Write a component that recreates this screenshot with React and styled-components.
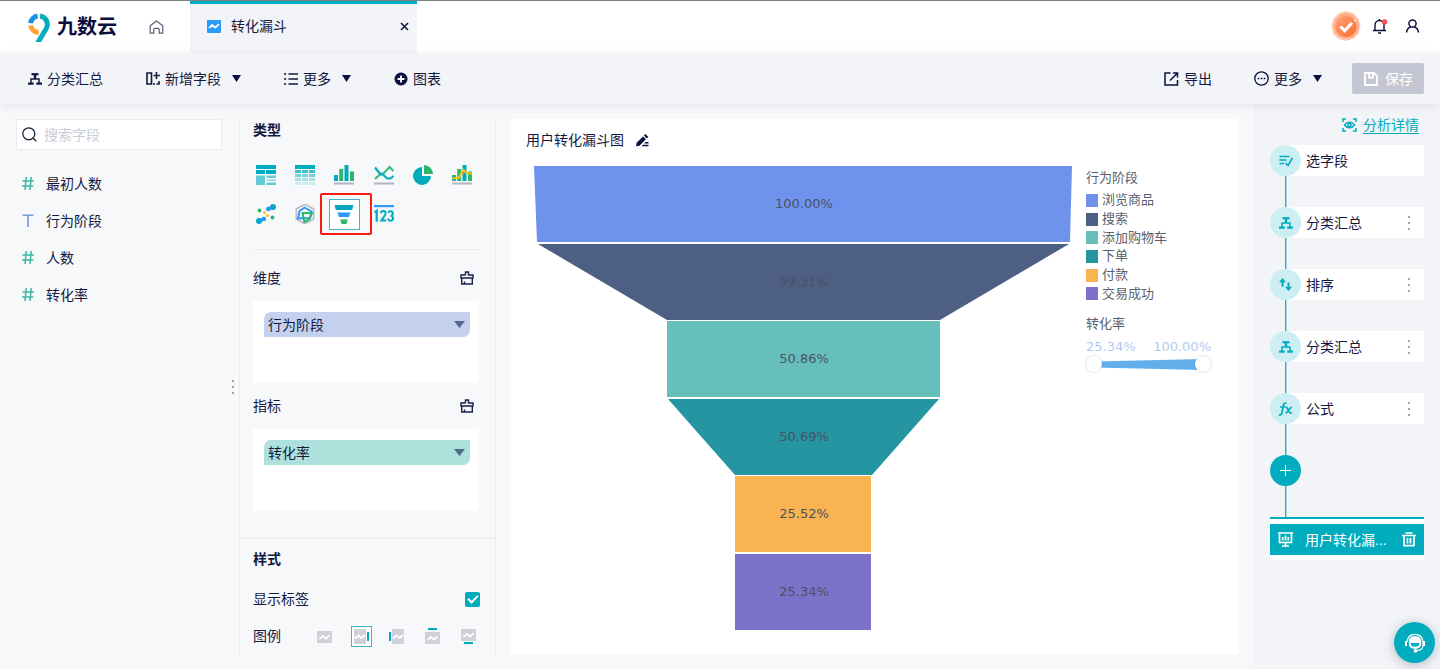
import React from "react";
import styled, { createGlobalStyle, css } from "styled-components";

const teal = "#00acbe";
const ink = "#0c0f3d";

const GlobalStyle = createGlobalStyle`
  *, *::before, *::after { box-sizing: border-box; }
  body {
    margin: 0;
    background: #f7f8fa;
    color: #14173f;
    font-family: "Liberation Sans", "Noto Sans CJK SC", sans-serif;
    font-size: 14px;
    line-height: 22px;
  }
  button, input { font: inherit; color: inherit; }
  button { padding: 0; border: 0; background: none; cursor: pointer; }
  svg { display: block; flex: none; }
  h1, h2, h3, ul, ol, p { margin: 0; padding: 0; list-style: none; font-size: 14px; font-weight: 400; }
`;

/* ---------- page frame ---------- */

const Page = styled.div`
  display: flex;
  flex-direction: column;
  min-height: 100vh;
`;

const Header = styled.header`
  display: flex;
  height: 53px;
  border-top: 1px solid #808080;
  background: #fff;
`;

const Brand = styled.a`
  display: flex;
  align-items: center;
  gap: 7px;
  padding-left: 28px;
  width: 149px;
  color: ${ink};
  font-size: 20px;
  font-weight: 700;
  text-decoration: none;
`;

const HomeLink = styled.a`
  display: flex;
  align-items: center;
  width: 41px;
  color: #5b5f7c;
`;

const Tab = styled.div`
  display: flex;
  align-items: center;
  gap: 10px;
  width: 227px;
  padding: 0 8px 5px 17px;
  border-top: 3px solid ${teal};
  background: #f2f4f8;
`;

const TabTitle = styled.span`
  flex: 1;
`;

const IconButton = styled.button`
  display: flex;
  align-items: center;
  justify-content: center;
`;

const Account = styled.div`
  display: flex;
  align-items: center;
  gap: 11px;
  margin-left: auto;
  padding: 0 20px 2px 0;
`;

const UserButton = styled(IconButton)`
  margin-left: 6px;
`;

const Toolbar = styled.nav`
  position: relative;
  display: flex;
  align-items: center;
  gap: 43px;
  height: 51px;
  padding: 0 16px 0 28px;
  background: #f2f4f8;
  box-shadow: 0 2px 10px rgba(12, 15, 61, 0.08);
`;

const ToolButton = styled.button`
  display: flex;
  align-items: center;
  gap: 5px;
`;

const ToolbarEnd = styled.div`
  display: flex;
  align-items: center;
  gap: 42px;
  margin-left: auto;
`;

const Caret = styled.span`
  width: ${(p) => (p.$color ? 11 : 9)}px;
  height: 7px;
  margin-left: 6px;
  background: ${(p) => p.$color || ink};
  clip-path: polygon(0 0, 100% 0, 50% 100%);
`;

const SaveButton = styled.button`
  display: flex;
  align-items: center;
  gap: 7px;
  height: 31px;
  margin-left: -12px;
  padding: 0 11px 0 12px;
  border-radius: 2px;
  background: #c5c6d4;
  color: #fff;
`;

const Workspace = styled.main`
  display: flex;
  flex: 1;
`;

/* ---------- field list ---------- */

const FieldPanel = styled.aside`
  display: flex;
  width: 240px;
  margin: 15px 0;
  padding-left: 16px;
  border-right: 1px solid #ebedf1;
`;

const FieldColumn = styled.div`
  flex: 1;
  min-width: 0;
`;

const SearchBox = styled.label`
  display: flex;
  align-items: center;
  gap: 7px;
  height: 31px;
  padding: 0 5px;
  border: 1px solid #e9ebf0;
  background: #fff;
`;

const SearchInput = styled.input`
  flex: 1;
  min-width: 0;
  height: 22px;
  padding: 0;
  border: 0;
  outline: 0;
  background: none;
  &::placeholder { color: #c9cbd8; opacity: 1; }
`;

const FieldList = styled.ul`
  && { padding: 15px 0 0 6px; }
`;

const FieldItem = styled.li`
  display: flex;
  align-items: center;
  gap: 12px;
  height: 37px;
`;

const ResizeHandle = styled.div`
  display: flex;
  flex: none;
  align-items: center;
  justify-content: center;
  width: 17px;
  padding-left: 4px;
  color: #9a9cab;
  cursor: col-resize;
`;

/* ---------- chart settings ---------- */

const SettingsPanel = styled.section`
  width: 256px;
  margin: 15px 0;
  border-right: 1px solid #ebedf1;
`;

const Group = styled.div`
  margin: 0 16px 0 13px;
`;

const StyleGroup = styled.div`
  margin: 0 15px 0 13px;
  padding-top: 9px;
`;

const Heading = styled.h2`
  && { font-weight: 700; }
`;

const TypeGrid = styled.div`
  display: grid;
  grid-template-columns: repeat(6, 20px);
  justify-content: space-between;
  row-gap: 19px;
  padding: 24px 7px 25px 3px;
  border-bottom: 1px solid #e9ebf0;
`;

const TypeButton = styled.button`
  position: relative;
  display: flex;
  width: 20px;
  height: 20px;
  svg { position: relative; }
  ${(p) =>
    p.$active &&
    css`
      &::before {
        content: "";
        position: absolute;
        inset: -5px;
        width: 31px;
        height: 31px;
        border: 1px solid #3fb4c2;
        background: #fff;
      }
      &::after {
        content: "";
        position: absolute;
        inset: -11px -18px -11px -14px;
        border: 2px solid #fb1a10;
        border-radius: 2px;
      }
    `}
`;

const GroupTitle = styled.div`
  display: flex;
  align-items: center;
  justify-content: space-between;
  padding: ${(p) => (p.$first ? 17 : 12)}px 5px 12px 0;
`;

const DropZone = styled.div`
  height: 82px;
  padding: 11px 9px 0 11px;
  background: #fff;
`;

const FieldChip = styled.button`
  display: flex;
  align-items: center;
  justify-content: space-between;
  width: 100%;
  height: 25px;
  padding: 0 5px 0 4px;
  border-radius: 7px 0;
  background: ${(p) => p.$color};
`;

const Divider = styled.hr`
  height: 1px;
  margin: 27px 0 0;
  border: 0;
  background: #e9ebf0;
`;

const SettingRow = styled.div`
  display: flex;
  align-items: center;
  justify-content: space-between;
  padding-top: ${(p) => p.$gap}px;
`;

const CheckBox = styled.input`
  appearance: none;
  display: flex;
  align-items: center;
  justify-content: center;
  width: 15px;
  height: 15px;
  margin: 0;
  border-radius: 2px;
  background: ${teal};
  &::before {
    content: "";
    width: 10px;
    height: 6px;
    margin-bottom: 3px;
    border: solid #fff;
    border-width: 0 0 2px 2px;
    transform: rotate(-45deg);
  }
  &:not(:checked)::before { display: none; }
`;

const LegendChoices = styled.div`
  display: flex;
  gap: 15px;
`;

const LegendChoice = styled.label`
  display: flex;
  border: 1px solid ${(p) => (p.$active ? "#3fb4c2" : "transparent")};
  background: ${(p) => (p.$active ? "#fff" : "none")};
`;

const HiddenRadio = styled.input`
  position: absolute;
  width: 1px;
  height: 1px;
  margin: 0;
  opacity: 0;
`;

/* ---------- chart card ---------- */

const ChartCard = styled.section`
  flex: 1;
  min-width: 0;
  margin: 15px;
  padding: 10px 28px 24px 15px;
  background: #fff;
`;

const ChartTitle = styled.div`
  display: flex;
  align-items: center;
  gap: 11px;
`;

const ChartArea = styled.div`
  display: flex;
  gap: 13px;
  padding: 15px 0 0 8px;
`;

const FunnelSvg = styled.svg`
  flex: 1;
  min-width: 0;
  height: auto;
  text {
    fill: #4a5165;
    font-family: "DejaVu Sans", sans-serif;
    font-size: 13px;
    text-anchor: middle;
  }
`;

const Legend = styled.div`
  width: 125px;
  padding-top: 2px;
  color: #595f6e;
  font-size: 13px;
  line-height: 20px;
`;

const LegendTitle = styled.h3`
  && { font-size: 13px; }
`;

const LegendList = styled.ul`
  && {
    display: flex;
    flex-direction: column;
    height: 112px;
    margin: 3px 0 11px;
    font-size: 13px;
    line-height: 18px;
  }
`;

const LegendItem = styled.li`
  display: flex;
  flex: 1;
  align-items: center;
  gap: 4px;
  &::before {
    content: "";
    width: 12px;
    height: 13px;
    background: ${(p) => p.$color};
  }
`;

const RangeValues = styled.div`
  display: flex;
  justify-content: space-between;
  margin-top: 3px;
  color: #b3c9f2;
  font-family: "DejaVu Sans", sans-serif;
`;

const RangeTrack = styled.div`
  position: relative;
  height: 16px;
  margin-top: -1px;
`;

const RangeInput = styled.input`
  position: absolute;
  inset: 0;
  width: 100%;
  height: 16px;
  margin: 0;
  appearance: none;
  background: none;
  pointer-events: none;
  &::-webkit-slider-thumb {
    appearance: none;
    width: 16px;
    height: 16px;
    border-radius: 50%;
    background: #fff;
    box-shadow: 0 0 2px rgba(80, 90, 130, 0.35);
    pointer-events: auto;
  }
`;

/* ---------- analysis steps ---------- */

const StepsPanel = styled.aside`
  width: 186px;
  padding: 10px 16px 0 16px;
  background: #f2f4f8;
`;

const DetailLink = styled.a`
  display: flex;
  align-items: center;
  justify-content: flex-end;
  gap: 6px;
  padding-right: 5px;
  color: ${teal};
  text-underline-offset: 3px;
`;

const StepList = styled.ol`
  && { padding-top: 9px; }
`;

const Step = styled.li`
  display: flex;
  align-items: center;
  height: 31px;
  margin-bottom: 31px;
  padding-right: 10px;
  position: relative;
  background: linear-gradient(to right, transparent 15px, #fff 15px);
  &::after {
    content: "";
    position: absolute;
    top: 31px;
    left: 15px;
    width: 1px;
    height: 31px;
    background: #1bb4c4;
    box-shadow: 1px 0 #9bdbe3;
  }
`;

const StepIcon = styled.span`
  display: flex;
  align-items: center;
  justify-content: center;
  width: 31px;
  height: 31px;
  margin-right: 5px;
  border-radius: 50%;
  background: #cdeff3;
  color: ${teal};
`;

const StepName = styled.span`
  flex: 1;
`;

const AddStep = styled(Step)`
  background: none;
`;

const AddButton = styled(IconButton)`
  width: 31px;
  height: 31px;
  border-radius: 50%;
  background: ${teal};
  color: #fff;
`;

const OutputFrame = styled.div`
  padding: 5px 0;
  border-top: 2px solid ${teal};
  background: #fff;
`;

const OutputStep = styled.div`
  display: flex;
  align-items: center;
  height: 31px;
  padding: 0 8px;
  background: ${teal};
  color: #fff;
`;

const OutputName = styled.span`
  flex: 1;
  margin-left: 12px;
  white-space: nowrap;
`;

const ChatButton = styled(IconButton)`
  position: fixed;
  right: 5px;
  bottom: 6px;
  width: 41px;
  height: 41px;
  border-radius: 50%;
  background: ${teal};
  box-shadow: 0 2px 12px rgba(12, 15, 61, 0.25);
`;

/* ---------- icons ---------- */

const LogoIcon = () => (
  <svg width="22" height="29" viewBox="0 0 22 29" fill="none" strokeWidth="5">
    <path d="M2.600 10.200A8.500 8.500 0 0 1 9.600 3" stroke="#1890ea" />
    <path d="M2.600 12.600A8.500 8.500 0 0 0 10.600 19.500" stroke="#ffa12e" />
    <path d="M12 3a8.500 8.500 0 0 1 6 13L9 31" stroke="#06adbd" />
  </svg>
);

const HomeIcon = () => (
  <svg width="15" height="14" viewBox="0 0 15 14" fill="none" stroke="currentColor" strokeWidth="1.200">
    <path d="M1.200 5.800 7.500 1l6.300 4.800v7.400h-3.600V9.600a1.300 1.300 0 0 0-1.300-1.300H6.100a1.300 1.300 0 0 0-1.300 1.300v3.600H1.200z" />
  </svg>
);

const TabIcon = () => (
  <svg width="14" height="13" viewBox="0 0 14 13">
    <rect width="14" height="13" rx="1" fill="#2a9bfb" />
    <path d="M2 8l3.200-3 3 2.600L12 4.200" fill="none" stroke="#fff" strokeWidth="1.700" />
  </svg>
);

const CloseIcon = () => (
  <svg width="9" height="9" viewBox="0 0 9 9" stroke={ink} strokeWidth="1.500">
    <path d="M1 1l7 7M8 1L1 8" />
  </svg>
);

const MedalIcon = () => (
  <svg width="30" height="30" viewBox="0 0 30 30">
    <defs>
      <linearGradient id="medal" x1="0" y1="0" x2="1" y2="1">
        <stop offset="0" stopColor="#ffa274" />
        <stop offset="1" stopColor="#f86b2c" />
      </linearGradient>
    </defs>
    <path d="M15 0l7 2 5 5 2.500 7-1.500 7.500-5 6L15 30l-7.500-2L2 22.500.5 15 2.500 7.500 8 2z" fill="#ffc8ad" />
    <path d="M15 2l6.500 2 4.500 4.500 2 6-1.500 6.500-4.500 5-7 2-6.500-2-4.500-5L2.500 15l2-6L9 4z" fill="#ffab85" />
    <circle cx="15" cy="15.500" r="10.500" fill="url(#medal)" />
    <path d="M9.500 15.500l4.200 4.300 7.300-8" fill="none" stroke="#fff" strokeWidth="3" />
    <circle cx="24" cy="9.500" r="1" fill="#fff" />
  </svg>
);

const BellIcon = () => (
  <svg width="16" height="16" viewBox="0 0 16 16" fill="none" stroke={ink} strokeWidth="1.400">
    <path d="M1 12.500h13M3 12.500V7a4.500 4.500 0 0 1 9 0v5.500M7.500 2.500V1M6 15h3" />
    <circle cx="12.500" cy="4" r="2.700" fill="#ee4f55" stroke="none" />
  </svg>
);

const UserIcon = () => (
  <svg width="15" height="14" viewBox="0 0 15 14" fill="none" stroke={ink} strokeWidth="1.500">
    <circle cx="7.500" cy="4.500" r="3.600" />
    <path d="M1.500 13.500c.4-3 2-5 4.400-5.500M13.500 13.500c-.4-3-2-5-4.400-5.500" />
  </svg>
);

const TreeIcon = () => (
  <svg width="14" height="12" viewBox="0 0 14 12" fill="none" stroke="currentColor">
    <path d="M3.500 1.200h7" strokeWidth="2.200" />
    <path d="M7 2v4" strokeWidth="2.400" />
    <path d="M3 10V6h8v4" strokeWidth="1.500" />
    <path d="M0 10.700h5.700M8.300 10.700H14" strokeWidth="2.200" />
  </svg>
);

const AddFieldIcon = () => (
  <svg width="14" height="13" viewBox="0 0 14 13" fill="none" stroke="currentColor" strokeWidth="1.600">
    <path d="M1 1h4.500v11H1zM10.500 0v7M7.500 3.500H14M7 12h2M10.500 12H13V9" />
  </svg>
);

const ListIcon = () => (
  <svg width="14" height="12" viewBox="0 0 14 12" stroke="currentColor" strokeWidth="1.600">
    <path d="M0 1h2.200M0 6h2.200M0 11h2.200M4.500 1H14M4.500 6H14M4.500 11H14" />
  </svg>
);

const PlusCircleIcon = () => (
  <svg width="14" height="14" viewBox="0 0 14 14">
    <circle cx="7" cy="7" r="6.500" fill={ink} />
    <path d="M7 3.500v7M3.500 7h7" stroke="#fff" strokeWidth="1.800" />
  </svg>
);

const ExportIcon = () => (
  <svg width="15" height="14" viewBox="0 0 15 14" fill="none" stroke={ink} strokeWidth="1.500">
    <path d="M6.500 1H1v12h12.500V8M9 1h4.500v4.500M13.500 1 6 8.500" />
  </svg>
);

const DotsCircleIcon = () => (
  <svg width="15" height="15" viewBox="0 0 15 15">
    <circle cx="7.500" cy="7.500" r="6.700" fill="none" stroke={ink} strokeWidth="1.300" />
    <path d="M3.700 7.500h1.600M6.700 7.500h1.600M9.700 7.500h1.600" stroke={ink} strokeWidth="1.600" />
  </svg>
);

const SaveIcon = () => (
  <svg width="14" height="14" viewBox="0 0 14 14" fill="none" stroke="#fff" strokeWidth="1.800">
    <path d="M1 1h9l3 3v9H1zM5 1v4.500h4V2" />
  </svg>
);

const SearchIcon = () => (
  <svg width="15" height="15" viewBox="0 0 15 15" fill="none" stroke="#20233f" strokeWidth="1.300">
    <circle cx="6.800" cy="6.800" r="6" />
    <path d="M11 11l3.300 3.300" />
  </svg>
);

const NumberIcon = () => (
  <svg width="12" height="13" viewBox="0 0 12 13" stroke="#3db5a2" strokeWidth="1.500">
    <path d="M4.200 0 3 13M9.200 0 8 13M.5 4h11.300M0 9h11.300" />
  </svg>
);

const TextIcon = () => (
  <svg width="12" height="13" viewBox="0 0 12 13" stroke="#7397e0" strokeWidth="1.600">
    <path d="M.5 1.200h11M6 1v12" />
  </svg>
);

const MoreIcon = () => (
  <svg width="3" height="14" viewBox="0 0 3 14" fill="currentColor">
    <rect x="1" y="0" width="2" height="2" />
    <rect x="1" y="6" width="2" height="2" />
    <rect x="1" y="12" width="2" height="2" />
  </svg>
);

const BrushIcon = () => (
  <svg width="14" height="14" viewBox="0 0 14 14" fill="none" stroke="#1c1f45" strokeWidth="1.400">
    <path d="M5.500 4V1h3v3H13v3H1V4h4.500M1.700 7v6h10.600V7M4.500 13v-2.500" />
  </svg>
);

const EditIcon = () => (
  <svg width="14" height="13" viewBox="0 0 14 13" fill={ink}>
    <path d="M1 12.200 1.600 8.800 8 2.400l2.900 2.900-6.400 6.400zM8.800 1.600 10.400 0l2.900 2.900-1.600 1.600zM8 10.800h5.500v1.500H6.500zM10.500 8h3v1.400H9.200z" />
  </svg>
);

const typeDrawings = {
  明细表: (
    <>
      <path d="M0 0h20v4H0zM0 5h9v4H0zM10 5h10v4H10z" fill={teal} />
      <path d="M0 10.500h9V20H0zM10.500 10.500H20V13h-9.500z" fill="#64ccd7" />
      <path d="M10.500 14.500H20V16h-9.500z" fill="#8cdbe2" />
      <path d="M10.500 17.500H20V20h-9.500z" fill="#64ccd7" />
    </>
  ),
  交叉表: (
    <>
      <path d="M0 0h20v4H0z" fill={teal} />
      <path d="M0 5h6v3H0zM7 5h6v3H7zM14 5h6v3h-6z" fill="#3bbdcb" />
      <path d="M0 9h6v3H0zM7 9h6v3H7zM14 9h6v3h-6z" fill="#76d0d9" />
      <path d="M0 13h6v3H0zM7 13h6v3H7zM14 13h6v3h-6z" fill="#a4e0e6" />
      <path d="M0 17h6v3H0zM7 17h6v3H7zM14 17h6v3h-6z" fill="#c8edf0" />
    </>
  ),
  柱形图: (
    <>
      <path d="M0 10h4v6H0zM10.500 0h4v16h-4z" fill={teal} />
      <path d="M5.200 4h4v12h-4zM16 6.500h4V16h-4z" fill="#2db56b" />
      <path d="M0 17.500h20v2H0z" fill="#b4b5c8" />
    </>
  ),
  折线图: (
    <>
      <path d="M1 14l6-5.500h2.500L15.500 2l4 4" fill="none" stroke="#3dba78" strokeWidth="2.200" />
      <path d="M1 2.500l5.500 6.800h2.300L13 13.500h3.500l3-2.500" fill="none" stroke={teal} strokeWidth="2.200" />
      <path d="M0 17.500h20v2H0z" fill="#b4b5c8" />
    </>
  ),
  饼图: (
    <>
      <path d="M9 2v9h9a9 9 0 1 1-9-9z" fill={teal} />
      <path d="M11 0a9 9 0 0 1 9 9h-9z" fill="#2db56b" />
    </>
  ),
  组合图: (
    <>
      <path d="M0 10h4v6H0zM5.200 4h4v12h-4zM16 6.500h4V16h-4z" fill="#2db56b" />
      <path d="M10.500 0h4v16h-4zM2 11h2v5H2z" fill={teal} />
      <path d="M.5 13.500 7 12.500 11.500 5l3.500 3.500h5" fill="none" stroke="#f9c116" strokeWidth="2.200" />
      <path d="M0 17.500h20v2H0z" fill="#b4b5c8" />
    </>
  ),
  散点图: (
    <>
      <path d="M3 17l5-2M12 5l5-2" stroke="#1ba2df" strokeWidth="3" />
      <circle cx="3" cy="17" r="3" fill="#08a5c8" />
      <circle cx="7.800" cy="15" r="2.300" fill="#2196f3" />
      <circle cx="17" cy="3" r="3" fill="#08a5c8" />
      <circle cx="12.300" cy="5" r="2.300" fill="#2196f3" />
      <circle cx="3.500" cy="6.500" r="1.900" fill="#2db56b" />
      <circle cx="16.500" cy="13.500" r="1.900" fill="#2db56b" />
      <circle cx="8.500" cy="8.500" r="1.500" fill="#f9c116" />
      <circle cx="11.500" cy="11.500" r="1.500" fill="#f9c116" />
    </>
  ),
  雷达图: (
    <>
      <path d="M10 .2 18.700 5v10L10 19.800 1.300 15V5z" fill="none" stroke="#babbcd" strokeWidth="1.700" />
      <path d="M9.500 3.500 16.500 7.500 15 14 3 14.500 4.500 7z" fill="none" stroke="#2a97f5" strokeWidth="1.900" />
      <path d="M7.500 9h9.500l-2.500 6-5 3z" fill="none" stroke="#2db56b" strokeWidth="2" />
    </>
  ),
  漏斗图: (
    <>
      <path d="M.5 1h19l-1.300 5H1.800z" fill="#07a7bb" />
      <path d="M3.400 8.500h13.200l-1.700 4.500H5.100z" fill="#2a9bfb" />
      <path d="M6.200 15.500h7.600L12.500 20h-5z" fill="#2db56b" />
    </>
  ),
  指标卡: (
    <>
      <path d="M0 1h20v2.200H0z" fill="#2a9bfb" />
      <path d="M.5 8.500 2.700 6.800v11" fill="none" stroke={teal} strokeWidth="2.200" />
      <path d="M7 9.300c0-3 4.600-3 4.600 0 0 2-2 3.700-4.300 7.300h4.900" fill="none" stroke={teal} strokeWidth="2" />
      <path d="M14.300 8.800c.3-2.400 4.500-2.200 4.500.6 0 1.700-1 2.300-2.300 2.300 1.500 0 2.600.8 2.600 2.500 0 3.200-4.800 3.300-5 .3" fill="none" stroke={teal} strokeWidth="2" />
    </>
  ),
};

const LegendIcon = ({ position }) => {
  const box = {
    none: [1, 4, 15, 12],
    right: [2, 2, 12, 15],
    left: [4, 2, 12, 15],
    top: [1, 5, 15, 12],
    bottom: [1, 2, 15, 12],
  }[position];
  const bar = {
    right: [15, 5, 2, 9],
    left: [1, 5, 2, 9],
    top: [4, 1, 9, 2],
    bottom: [4, 15, 9, 2],
  }[position];
  const [x, y, w, h] = box;
  return (
    <svg width="19" height="19" viewBox="0 0 19 19">
      <rect x={x} y={y} width={w} height={h} fill="#cfd0da" />
      <path
        d={`M${x + w / 2 - 5} ${y + h / 2 + 2}l3.500-3 3 2.500 3.500-3`}
        fill="none"
        stroke="#fff"
        strokeWidth="1.800"
      />
      {bar && <rect x={bar[0]} y={bar[1]} width={bar[2]} height={bar[3]} fill={teal} />}
    </svg>
  );
};

const DetailIcon = () => (
  <svg width="15" height="14" viewBox="0 0 15 14" fill="none" stroke={teal} strokeWidth="1.500">
    <path d="M4 1H1v3M11 1h3v3M4 13H1v-3M11 13h3v-3" />
    <path d="M2.500 7c2.500-3.600 7.500-3.600 10 0-2.500 3.600-7.500 3.600-10 0z" strokeWidth="1.400" />
    <circle cx="7.500" cy="7" r="1.600" />
  </svg>
);

const PickIcon = () => (
  <svg width="14" height="12" viewBox="0 0 14 12" fill="none" stroke={teal} strokeWidth="1.700">
    <path d="M.5 1.500h10M.5 5h7M.5 8.500h4.500M6.500 8l2.500 2.500 4.500-7.500" />
  </svg>
);

const SortIcon = () => (
  <svg width="13" height="13" viewBox="0 0 13 13" fill={teal}>
    <path d="M3.500 0 7 4.300H4.500V8.500h-2V4.300H0zM9.500 13 6 8.700h2.500V4.500h2v4.200H13z" />
  </svg>
);

const FormulaIcon = () => (
  <svg width="15" height="14" viewBox="0 0 15 14" fill="none" stroke={teal} strokeWidth="1.700">
    <path d="M8.500 1.500C6.500.5 5.800 1.600 5.500 3L4 10.500C3.700 12.300 2.700 13.300.8 12.600M2 5h5.500" />
    <path d="M7.800 5.500c2.200-1 2.300 5.500 4.500 5.500.6 0 1-.3 1.300-.8M14 5.500c-2-1-4 5.500-6.500 5.300" />
  </svg>
);

const PlusIcon = () => (
  <svg width="11" height="11" viewBox="0 0 11 11" stroke="currentColor">
    <path d="M5.500 0v11M0 5.500h11" />
  </svg>
);

const BoardIcon = () => (
  <svg width="15" height="15" viewBox="0 0 15 15" fill="none" stroke="#fff" strokeWidth="1.700">
    <path d="M0 1h15M1.500 1v9.500h12V1M7.500 10.500V14M4 14h7M4.700 5v3.500M7.500 3.500v5M10.300 5v3.500" />
  </svg>
);

const TrashIcon = () => (
  <svg width="14" height="15" viewBox="0 0 14 15" fill="none" stroke="#fff" strokeWidth="1.700">
    <path d="M3.500 1h7M0 3.500h14M2 3.500v10.200h10V3.500M5.500 6v5.500M8.500 6v5.500" />
  </svg>
);

const ChatIcon = () => (
  <svg width="20" height="20" viewBox="0 0 20 20" fill="none" stroke="#fff" strokeWidth="1.300">
    <path d="M2 9C2.500 4 5.500 1.300 10 1.300S17.500 4 18 9v4c-.4 2.800-3 4.500-6.500 4.800" />
    <path d="M1 8v5M19 8v5" strokeWidth="2" />
    <rect x="4.500" y="4" width="11" height="11" rx="4" fill="#fff" />
    <path d="M5.500 10h9c-.3 2.800-1.700 3.800-4.500 3.800s-4.200-1-4.500-3.800z" fill={teal} stroke="none" />
    <circle cx="10.500" cy="17.800" r="1.200" fill="#fff" />
  </svg>
);

/* ---------- data ---------- */

const fields = [
  { name: "最初人数", numeric: true },
  { name: "行为阶段", numeric: false },
  { name: "人数", numeric: true },
  { name: "转化率", numeric: true },
];

const stages = [
  { name: "浏览商品", rate: "100.00%", color: "#6f92ed", shape: "0,0 538,0 536,76 3,76", y: 42 },
  { name: "搜索", rate: "99.31%", color: "#4d5f82", shape: "4,78 535,78 406,154 133,154", y: 120 },
  { name: "添加购物车", rate: "50.86%", color: "#66bfba", shape: "133,155 406,155 406,231 133,231", y: 197 },
  { name: "下单", rate: "50.69%", color: "#2595a2", shape: "134,233 405,233 338,309 201,309", y: 275 },
  { name: "付款", rate: "25.52%", color: "#f9b350", shape: "201,310 337,310 337,386 201,386", y: 352 },
  { name: "交易成功", rate: "25.34%", color: "#7b71c6", shape: "201,388 337,388 337,464 201,464", y: 430 },
];

const steps = [
  { name: "选字段", icon: <PickIcon /> },
  { name: "分类汇总", icon: <TreeIcon />, menu: true },
  { name: "排序", icon: <SortIcon />, menu: true },
  { name: "分类汇总", icon: <TreeIcon />, menu: true },
  { name: "公式", icon: <FormulaIcon />, menu: true },
];

const MoreButton = styled(IconButton)`
  width: 12px;
  height: 22px;
  color: #a3a5bb;
`;

export default function App() {
  const [chartType, setChartType] = React.useState("漏斗图");
  const [legend, setLegend] = React.useState("right");
  return (
    <Page>
      <GlobalStyle />
      <Header>
        <Brand href="#">
          <LogoIcon />
          九数云
        </Brand>
        <HomeLink href="#" aria-label="首页">
          <HomeIcon />
        </HomeLink>
        <Tab>
          <TabIcon />
          <TabTitle>转化漏斗</TabTitle>
          <IconButton aria-label="关闭">
            <CloseIcon />
          </IconButton>
        </Tab>
        <Account>
          <IconButton aria-label="任务">
            <MedalIcon />
          </IconButton>
          <IconButton aria-label="通知">
            <BellIcon />
          </IconButton>
          <UserButton aria-label="账号">
            <UserIcon />
          </UserButton>
        </Account>
      </Header>

      <Toolbar>
        <ToolButton>
          <TreeIcon />
          分类汇总
        </ToolButton>
        <ToolButton>
          <AddFieldIcon />
          新增字段
          <Caret />
        </ToolButton>
        <ToolButton>
          <ListIcon />
          更多
          <Caret />
        </ToolButton>
        <ToolButton>
          <PlusCircleIcon />
          图表
        </ToolButton>
        <ToolbarEnd>
          <ToolButton>
            <ExportIcon />
            导出
          </ToolButton>
          <ToolButton>
            <DotsCircleIcon />
            更多
            <Caret />
          </ToolButton>
          <SaveButton>
            <SaveIcon />
            保存
          </SaveButton>
        </ToolbarEnd>
      </Toolbar>

      <Workspace>
        <FieldPanel>
          <FieldColumn>
            <SearchBox>
              <SearchIcon />
              <SearchInput type="text" placeholder="搜索字段" aria-label="搜索字段" />
            </SearchBox>
            <FieldList>
              {fields.map((f) => (
                <FieldItem key={f.name}>
                  {f.numeric ? <NumberIcon /> : <TextIcon />}
                  {f.name}
                </FieldItem>
              ))}
            </FieldList>
          </FieldColumn>
          <ResizeHandle>
            <MoreIcon />
          </ResizeHandle>
        </FieldPanel>

        <SettingsPanel>
          <Group>
            <Heading>类型</Heading>
            <TypeGrid>
              {Object.entries(typeDrawings).map(([name, drawing]) => (
                <TypeButton
                  key={name}
                  aria-label={name}
                  aria-pressed={name === chartType}
                  $active={name === chartType}
                  onClick={() => setChartType(name)}
                >
                  <svg width="20" height="20" viewBox="0 0 20 20">
                    {drawing}
                  </svg>
                </TypeButton>
              ))}
            </TypeGrid>
            <GroupTitle $first>
              维度
              <IconButton aria-label="清空维度">
                <BrushIcon />
              </IconButton>
            </GroupTitle>
            <DropZone>
              <FieldChip $color="#c4d1ee">
                行为阶段
                <Caret $color="#586590" />
              </FieldChip>
            </DropZone>
            <GroupTitle>
              指标
              <IconButton aria-label="清空指标">
                <BrushIcon />
              </IconButton>
            </GroupTitle>
            <DropZone>
              <FieldChip $color="#afe1dc">
                转化率
                <Caret $color="#4f6b86" />
              </FieldChip>
            </DropZone>
          </Group>
          <Divider />
          <StyleGroup>
            <Heading>样式</Heading>
            <SettingRow $gap={18}>
              <label htmlFor="show-labels">显示标签</label>
              <CheckBox id="show-labels" type="checkbox" defaultChecked />
            </SettingRow>
            <SettingRow $gap={15}>
              <span>图例</span>
              <LegendChoices>
                {["none", "right", "left", "top", "bottom"].map((pos) => (
                  <LegendChoice key={pos} $active={pos === legend}>
                    <HiddenRadio
                      type="radio"
                      name="legend"
                      aria-label={pos}
                      checked={pos === legend}
                      onChange={() => setLegend(pos)}
                    />
                    <LegendIcon position={pos} />
                  </LegendChoice>
                ))}
              </LegendChoices>
            </SettingRow>
          </StyleGroup>
        </SettingsPanel>

        <ChartCard>
          <ChartTitle>
            <h1>用户转化漏斗图</h1>
            <IconButton aria-label="编辑标题">
              <EditIcon />
            </IconButton>
          </ChartTitle>
          <ChartArea>
            <FunnelSvg viewBox="0 0 539 464" role="img" aria-label="用户转化漏斗图">
              {stages.map((s) => (
                <g key={s.name}>
                  <polygon points={s.shape} fill={s.color} />
                  <text x="270" y={s.y}>
                    {s.rate}
                  </text>
                </g>
              ))}
            </FunnelSvg>
            <Legend>
              <LegendTitle>行为阶段</LegendTitle>
              <LegendList>
                {stages.map((s) => (
                  <LegendItem key={s.name} $color={s.color}>
                    {s.name}
                  </LegendItem>
                ))}
              </LegendList>
              <LegendTitle>转化率</LegendTitle>
              <RangeValues>
                <span>25.34%</span>
                <span>100.00%</span>
              </RangeValues>
              <RangeTrack>
                <svg width="125" height="16" viewBox="0 0 125 16">
                  <path d="M8 5.500 117 3v11L8 11.500z" fill="#62aeea" />
                </svg>
                <RangeInput type="range" min="25.34" max="100" step="0.01" defaultValue="25.34" aria-label="最小转化率" />
                <RangeInput type="range" min="25.34" max="100" step="0.01" defaultValue="100" aria-label="最大转化率" />
              </RangeTrack>
            </Legend>
          </ChartArea>
        </ChartCard>

        <StepsPanel>
          <DetailLink href="#">
            <DetailIcon />
            分析详情
          </DetailLink>
          <StepList>
            {steps.map((s, i) => (
              <Step key={i}>
                <StepIcon>{s.icon}</StepIcon>
                <StepName>{s.name}</StepName>
                {s.menu && (
                  <MoreButton aria-label="更多操作">
                    <MoreIcon />
                  </MoreButton>
                )}
              </Step>
            ))}
            <AddStep>
              <AddButton aria-label="添加步骤">
                <PlusIcon />
              </AddButton>
            </AddStep>
          </StepList>
          <OutputFrame>
            <OutputStep>
              <BoardIcon />
              <OutputName>用户转化漏...</OutputName>
              <IconButton aria-label="删除">
                <TrashIcon />
              </IconButton>
            </OutputStep>
          </OutputFrame>
        </StepsPanel>
      </Workspace>

      <ChatButton aria-label="在线客服">
        <ChatIcon />
      </ChatButton>
    </Page>
  );
}
